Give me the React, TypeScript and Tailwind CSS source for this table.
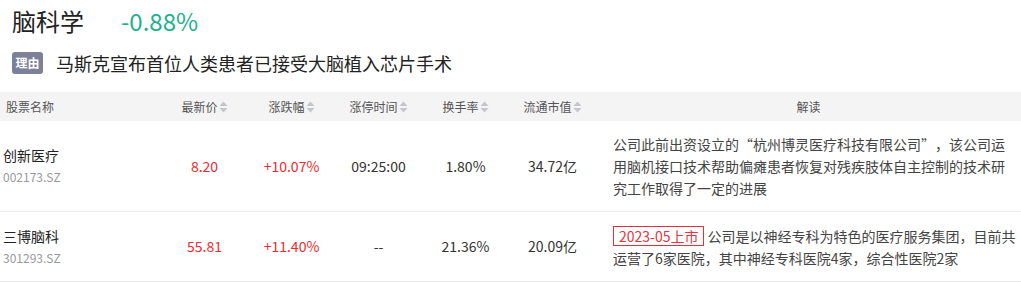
import type { ReactNode } from 'react'

type Row = {
  name: string
  code: string
  price: string
  change: string
  time: string
  turnover: string
  cap: string
  tag?: string
  note: ReactNode
}

// full-width quote marks, as the CJK font draws them in the reference
const Q = ({ c, open }: { c: string; open?: boolean }) => (
  <span className={`inline-block w-[14px] ${open ? 'text-right' : 'text-left'}`}>{c}</span>
)

const rows: Row[] = [
  {
    name: '创新医疗',
    code: '002173.SZ',
    price: '8.20',
    change: '+10.07%',
    time: '09:25:00',
    turnover: '1.80%',
    cap: '34.72亿',
    note: (
      <>
        公司此前出资设立的<Q c="“" open />杭州博灵医疗科技有限公司<Q c="”" />，该公司运用脑机接口技术帮助偏瘫患者恢复对残疾肢体自主控制的技术研究工作取得了一定的进展
      </>
    ),
  },
  {
    name: '三博脑科',
    code: '301293.SZ',
    price: '55.81',
    change: '+11.40%',
    time: '--',
    turnover: '21.36%',
    cap: '20.09亿',
    tag: '2023-05上市',
    note: '公司是以神经专科为特色的医疗服务集团，目前共运营了6家医院，其中神经专科医院4家，综合性医院2家',
  },
]

const SortIcon = () => (
  <svg width="9" height="12" viewBox="0 0 9 12" className="ml-[1px] shrink-0">
    <path d="M4.5 0.5 L8.5 5 L0.5 5 Z" fill="#c4c6cc" />
    <path d="M4.5 11.5 L8.5 7 L0.5 7 Z" fill="#c4c6cc" />
  </svg>
)

const Th = ({ children, sort }: { children: ReactNode; sort?: boolean }) => (
  <th className="h-[29px] p-0 font-normal">
    <div className="flex items-center justify-center">
      <span>{children}</span>
      {sort && <SortIcon />}
    </div>
  </th>
)

export default function App() {
  return (
    <div
      className="w-[1021px] h-[283px] overflow-hidden bg-white text-[#333]"
      style={{ fontFamily: '"Noto Sans CJK SC", "Noto Sans", sans-serif' }}
    >
      <div className="h-[42px] flex items-center pl-[12px] gap-[37px]">
        <span className="text-[24px] leading-[32px] text-[#222]">脑科学</span>
        <span className="text-[24px] leading-[32px] text-[#1bb28c]">-0.88%</span>
      </div>
      <div className="h-[42px] flex items-center pl-[12px]">
        <span className="w-[31px] h-[22px] rounded-[3px] bg-[#7c8199] text-white text-[12px] font-bold flex items-center justify-center">
          理由
        </span>
        <span className="ml-[13px] text-[18px] leading-[26px] text-[#222]">
          马斯克宣布首位人类患者已接受大脑植入芯片手术
        </span>
      </div>
      <table className="mt-[8px] w-[1021px] table-fixed border-collapse">
        <colgroup>
          <col className="w-[161px]" />
          <col className="w-[87px]" />
          <col className="w-[87px]" />
          <col className="w-[87px]" />
          <col className="w-[87px]" />
          <col className="w-[87px]" />
          <col className="w-[425px]" />
        </colgroup>
        <thead>
          <tr className="bg-[#f4f4f5] text-[12px] text-[#555]">
            <th className="h-[29px] p-0 pl-[6px] text-left font-normal">股票名称</th>
            <Th sort>最新价</Th>
            <Th sort>涨跌幅</Th>
            <Th sort>涨停时间</Th>
            <Th sort>换手率</Th>
            <Th sort>流通市值</Th>
            <Th>解读</Th>
          </tr>
        </thead>
        <tbody>
          {rows.map((r, i) => (
            <tr
              key={r.code}
              className={`border-b border-[#ececec] text-[14px] ${i === 0 ? 'h-[90px]' : 'h-[70px]'}`}
            >
              <td className="p-0 pl-[3px]">
                <div className="leading-[21px] text-[#222]">{r.name}</div>
                <div className="leading-[21px] text-[12px] text-[#999]">{r.code}</div>
              </td>
              <td className="p-0 text-center text-[#ee2a2f]">{r.price}</td>
              <td className="p-0 text-center text-[#ee2a2f]">{r.change}</td>
              <td className="p-0 text-center">{r.time}</td>
              <td className="p-0 text-center">{r.turnover}</td>
              <td className="p-0 text-center">{r.cap}</td>
              <td className="p-0 pl-[17px] pr-[3px] py-[12px] leading-[22px] text-[#444]">
                {r.tag && (
                  <span className="inline-block mr-[3px] px-[5px] leading-[18px] border border-[#e0323e] text-[#e63340]">
                    {r.tag}
                  </span>
                )}
                {r.note}
              </td>
            </tr>
          ))}
        </tbody>
      </table>
    </div>
  )
}
